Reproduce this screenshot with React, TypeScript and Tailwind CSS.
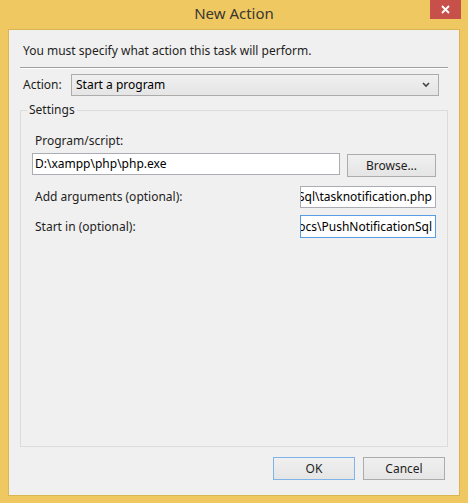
import React from "react";

const font = { fontFamily: '"Noto Sans", "Segoe UI", sans-serif' };

function Btn({ label, primary = false, className = "" }: { label: string; primary?: boolean; className?: string }) {
  return (
    <div
      className={`flex h-[23px] items-center justify-center border bg-gradient-to-b from-[#f0f0f0] to-[#e5e5e5] text-[12px] text-[#1e1e1e] ${
        primary ? "border-[#7eb4ea]" : "border-[#acacac]"
      } ${className}`}
    >
      {label}
    </div>
  );
}

// text box scrolled to its end, the start is clipped on the left
function Field({ text, focused = false, className = "" }: { text: string; focused?: boolean; className?: string }) {
  return (
    <div
      className={`flex h-[22px] items-center justify-end overflow-hidden border bg-white pr-[3px] text-[12px] text-black ${
        focused ? "border-[#569de5]" : "border-[#abadb3]"
      } ${className}`}
    >
      <span className="whitespace-nowrap">{text}</span>
    </div>
  );
}

export default function App() {
  return (
    <div className="flex h-[503px] w-[468px] flex-col bg-[#f0c862] px-[8px] pb-[7px]" style={font}>
      {/* title bar */}
      <div className="relative flex h-[29px] shrink-0 items-center justify-center">
        <span className="pb-[2px] text-[15px] text-[#3a372f]">New Action</span>
        <div className="absolute right-[-1px] top-0 flex h-[19px] w-[31px] items-center justify-center bg-[#c7504b]">
          <svg width="9" height="9" viewBox="0 0 9 9">
            <path d="M1 1 L8 8 M8 1 L1 8" stroke="#fff" strokeWidth="1.8" />
          </svg>
        </div>
      </div>

      {/* client area */}
      <div className="flex flex-1 flex-col border border-[#dcb553] bg-[#f0f0f0] px-[11px]">
        <p className="mt-[13px] pl-[3px] text-[12px] leading-[16px] text-[#1e1e1e]">
          You must specify what action this task will perform.
        </p>
        <div className="mt-[8px] h-[2px] border-t border-b border-t-[#a0a0a0] border-b-white" />

        <div className="mt-[5px] flex items-center">
          <span className="w-[51px] pl-[3px] text-[12px] text-[#1e1e1e]">Action:</span>
          <div className="mr-[9px] flex h-[22px] flex-1 items-center justify-between border border-[#acacac] bg-gradient-to-b from-[#f0f0f0] to-[#e5e5e5] pl-[4px] pr-[8px] text-[12px] text-black">
            <span>Start a program</span>
            <svg width="8" height="6" viewBox="0 0 8 6">
              <path d="M1 1 L4 4 L7 1" fill="none" stroke="#444" strokeWidth="1.6" />
            </svg>
          </div>
        </div>

        {/* settings group */}
        <div className="relative mt-[14px] h-[337px] border border-[#dcdcdc] px-[11px] pt-[22px]">
          <span className="absolute left-[6px] top-[-9px] bg-[#f0f0f0] px-[2px] text-[12px] leading-[16px] text-[#1e1e1e]">
            Settings
          </span>
          <div className="pl-[3px] text-[12px] leading-[16px] text-[#1e1e1e]">Program/script:</div>
          <div className="mt-[4px] flex items-start gap-[7px]">
            <div className="flex h-[22px] w-[308px] items-center border border-[#abadb3] bg-white pl-[2px] text-[12px] text-black">
              D:\xampp\php\php.exe
            </div>
            <Btn label="Browse..." className="mt-[1px] h-[22px] w-[89px]" />
          </div>
          <div className="mt-[9px] flex items-center justify-between">
            <span className="pl-[3px] text-[12px] text-[#1e1e1e]">Add arguments (optional):</span>
            <Field text="C:\xampp\htdocs\PushNotificationSql\tasknotification.php" className="w-[136px]" />
          </div>
          <div className="mt-[7px] flex items-center justify-between">
            <span className="pl-[3px] text-[12px] text-[#1e1e1e]">Start in (optional):</span>
            <Field text="C:\xampp\htdocs\PushNotificationSql" focused className="h-[23px] w-[136px]" />
          </div>
        </div>

        <div className="mt-[10px] flex justify-end gap-[8px] pr-[3px]">
          <Btn label="OK" primary className="w-[82px]" />
          <Btn label="Cancel" className="w-[82px]" />
        </div>
      </div>
    </div>
  );
}
